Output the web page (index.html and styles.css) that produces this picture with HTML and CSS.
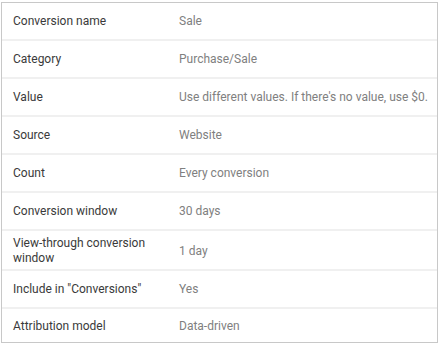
FILE: index.html
```html
<!DOCTYPE html>
<html lang="en">
<head>
    <meta charset="UTF-8">
    <meta name="viewport" content="width=device-width, initial-scale=1.0">
    <title>Conversion settings</title>
    <link rel="stylesheet" href="styles.css">
</head>
<body>
    <!-- Conversion action summary table -->
    <div class="settings">
        <div class="row">
            <div class="label">Conversion name</div>
            <div class="value">Sale</div>
        </div>
        <div class="row">
            <div class="label">Category</div>
            <div class="value">Purchase/Sale</div>
        </div>
        <div class="row">
            <div class="label">Value</div>
            <div class="value">Use different values. If there's no value, use $0.</div>
        </div>
        <div class="row">
            <div class="label">Source</div>
            <div class="value">Website</div>
        </div>
        <div class="row">
            <div class="label">Count</div>
            <div class="value">Every conversion</div>
        </div>
        <div class="row">
            <div class="label">Conversion window</div>
            <div class="value">30 days</div>
        </div>
        <div class="row row-tall">
            <div class="label">View-through conversion window</div>
            <div class="value">1 day</div>
        </div>
        <div class="row">
            <div class="label">Include in "Conversions"</div>
            <div class="value">Yes</div>
        </div>
        <div class="row">
            <div class="label">Attribution model</div>
            <div class="value">Data-driven</div>
        </div>
    </div>
</body>
</html>
```

FILE: styles.css
```css
body {
    margin: 0;
    padding: 2px 2px 0 1px;
    background-color: #fff;
    font-family: Roboto, "Noto Sans", sans-serif;
    font-size: 12px;
}

.settings {
    width: 435px;
    border: 1px solid #c8c8c8;
    background-color: #fff;
}

.row {
    display: grid;
    grid-template-columns: 166px 1fr;
    align-items: center;
    min-height: 36px;
    padding: 0 0 0 11px;
    border-bottom: 2px solid #f0f0f0;
}

.row-tall {
    padding-top: 2px;
    padding-bottom: 0;
}

.row:last-child {
    min-height: 32px;
    padding-top: 1px;
    border-bottom: none;
}

.label {
    color: #3a3a3a;
    line-height: 15px;
    padding-right: 24px;
}

.value {
    color: #808080;
    line-height: 15px;
}
```
